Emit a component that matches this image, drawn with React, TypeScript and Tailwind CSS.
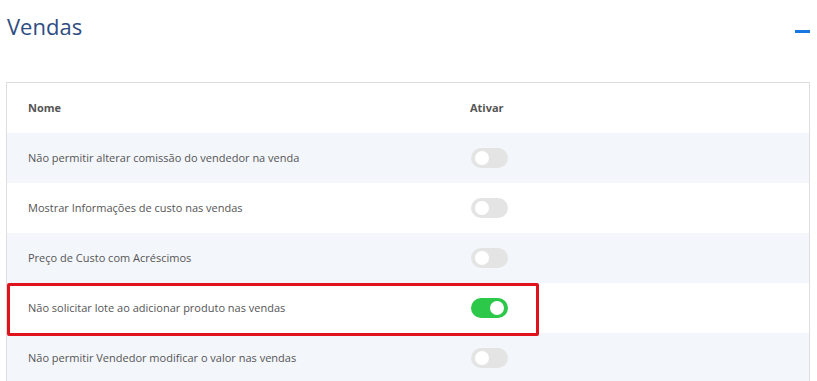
import React from 'react';

type Item = { label: string; on: boolean; marked?: boolean };

const items: Item[] = [
  { label: 'Não permitir alterar comissão do vendedor na venda', on: false },
  { label: 'Mostrar Informações de custo nas vendas', on: false },
  { label: 'Preço de Custo com Acréscimos', on: false },
  { label: 'Não solicitar lote ao adicionar produto nas vendas', on: true, marked: true },
  { label: 'Não permitir Vendedor modificar o valor nas vendas', on: false },
];

function Toggle({ on }: { on: boolean }) {
  return (
    <div
      className={`flex h-[20px] w-[37px] items-center rounded-full px-[4px] ${
        on ? 'justify-end bg-[#2bc84a]' : 'justify-start bg-[#e4e4e4]'
      }`}
    >
      <div className="h-[14px] w-[14px] rounded-full bg-white" />
    </div>
  );
}

export default function App() {
  return (
    <div className="min-h-screen bg-white font-['Open_Sans',sans-serif] text-[#555]">
      <div className="flex items-start justify-between pl-[7px] pr-[7px] pt-[10px]">
        <h2 className="text-[22px] font-normal leading-[32px] text-[#2f4d82]">Vendas</h2>
        <div className="mt-[20px] h-[3px] w-[15px] bg-[#1a76e0]" />
      </div>

      <div className="ml-[6px] mr-[7px] mt-[40px] border border-[#dedede] bg-white">
        <div className="grid h-[50px] grid-cols-[442px_1fr] items-center text-[11px] font-bold text-[#555]">
          <div className="pl-[21px]">Nome</div>
          <div className="pl-[21px]">Ativar</div>
        </div>
        {items.map((it, i) => (
          <div
            key={it.label}
            className={`relative grid h-[50px] grid-cols-[442px_1fr] items-center text-[11px] ${
              i % 2 === 0 ? 'bg-[#f3f6fb]' : 'bg-white'
            }`}
          >
            <div className="pl-[21px]">{it.label}</div>
            <div className="pl-[22px]">
              <Toggle on={it.on} />
            </div>
            {it.marked && (
              <div className="pointer-events-none absolute left-0 top-0 z-10 h-[53px] w-[532px] rounded-[2px] border-[3px] border-[#e0121c]" />
            )}
          </div>
        ))}
      </div>
    </div>
  );
}
